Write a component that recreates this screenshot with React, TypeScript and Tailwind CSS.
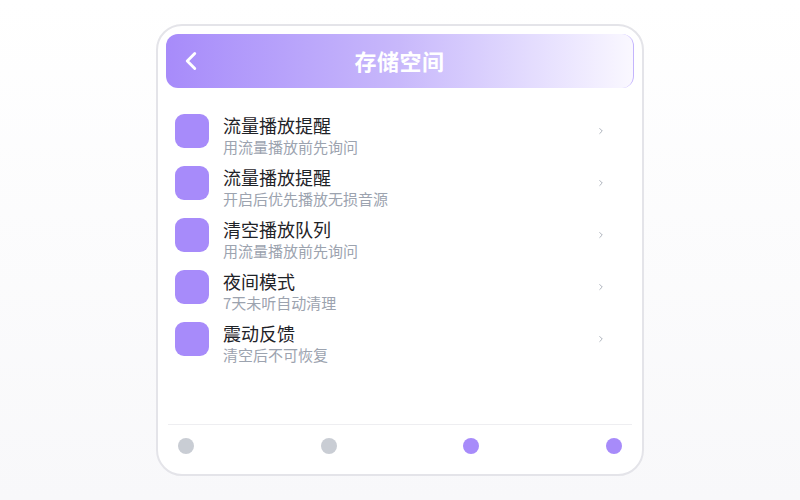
import React from 'react';
import { ChevronLeft, ChevronRight } from 'lucide-react';

const items = [
  { title: '流量播放提醒', desc: '用流量播放前先询问' },
  { title: '流量播放提醒', desc: '开启后优先播放无损音源' },
  { title: '清空播放队列', desc: '用流量播放前先询问' },
  { title: '夜间模式', desc: '7天未听自动清理' },
  { title: '震动反馈', desc: '清空后不可恢复' },
];

const dots = ['bg-[#c9cdd4]', 'bg-[#c9cdd4]', 'bg-[#a78bfa]', 'bg-[#a78bfa]'];

const App = () => {
  return (
    <div
      className="w-[800px] h-[500px] bg-gradient-to-b from-white to-[#f8f8fa] flex justify-center pt-[24px]"
      style={{ fontFamily: '"Noto Sans CJK SC", "Noto Sans", sans-serif' }}
    >
      <div className="w-[488px] h-[452px] border-2 border-[#e4e4e9] rounded-[26px] bg-white p-[8px] flex flex-col">
        {/* Header */}
        <div className="relative h-[54px] rounded-xl border-r border-[#c4b5fd] bg-gradient-to-r from-[#a78bfa] via-[#c8b8fb] to-[#faf8ff] flex items-center justify-center">
          <ChevronLeft className="absolute left-[10px] w-[30px] h-[30px] text-white" strokeWidth={2.3} />
          <h1 className="text-white text-[22px] font-bold tracking-wide -mt-[2px]">存储空间</h1>
        </div>

        {/* List */}
        <div className="flex flex-col pt-[26px] px-[9px] flex-1">
          {items.map((item, index) => (
            <div key={index} className="h-[52px] flex items-start">
              <div className="w-[34px] h-[34px] rounded-[9px] bg-[#a78bfa] shrink-0"></div>
              <div className="ml-[14px] flex-1 -mt-[1px]">
                <p className="text-[18px] leading-[24px] text-[#1f2328]">{item.title}</p>
                <p className="text-[15px] leading-[19px] text-[#9ca3af]">{item.desc}</p>
              </div>
              <ChevronRight className="w-[10px] h-[10px] text-[#9ca3af] mt-[12px] mr-[19px]" strokeWidth={2} />
            </div>
          ))}
        </div>

        {/* Bottom dots */}
        <div className="mx-[2px] border-t border-[#eeeef1] h-[42px] flex items-center justify-between px-[10px]">
          {dots.map((c, i) => (
            <div key={i} className={`w-[16px] h-[16px] rounded-full ${c}`}></div>
          ))}
        </div>
      </div>
    </div>
  );
};

export default App;
